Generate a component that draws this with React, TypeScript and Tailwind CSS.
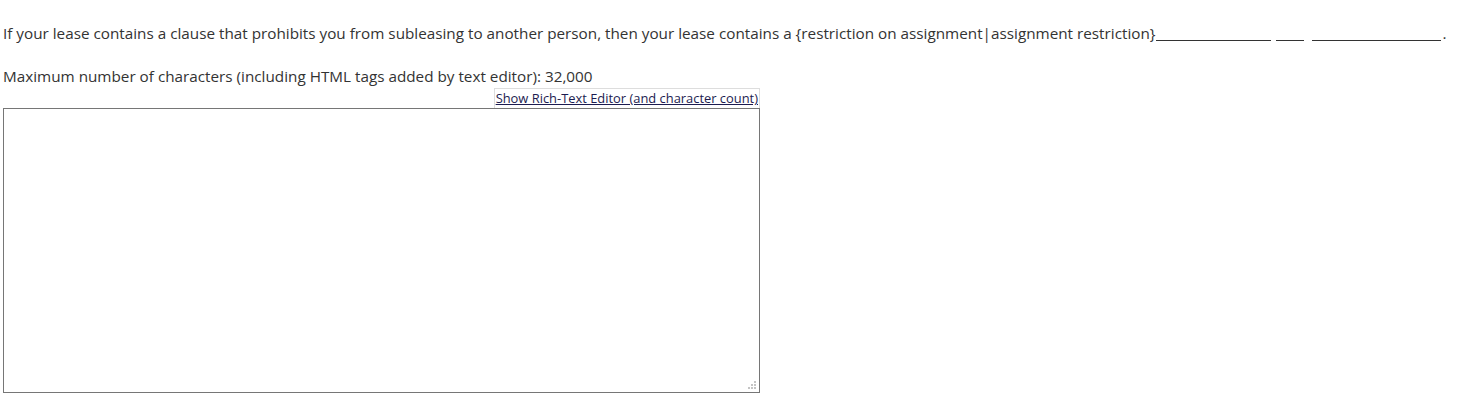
import React from "react";

export default function App() {
  return (
    <div
      className="min-h-[405px] w-[1464px] bg-white pl-[3px] pt-[21px] text-[#333333]"
      style={{ fontFamily: '"Open Sans", sans-serif' }}
    >
      <p className="m-0 whitespace-nowrap text-[15.27px] leading-[24px]">
        If your lease contains a clause that prohibits you from subleasing to another person, then your lease contains a{" "}
        {"{restriction on assignment|assignment restriction}"}
        <span className="mb-[-2px] inline-block h-[1px] w-[115px] border-b border-[#333333] align-baseline" />
        <span className="mb-[-2px] ml-[5px] inline-block h-[1px] w-[28px] border-b border-[#333333] align-baseline" />
        <span className="mb-[-2px] ml-[8px] inline-block h-[1px] w-[129px] border-b border-[#333333] align-baseline" />
        <span className="ml-[2px]">.</span>
      </p>
      <p className="m-0 mt-[19px] text-[15.27px] leading-[24px]">
        Maximum number of characters (including HTML tags added by text editor): 32,000
      </p>
      <div className="flex w-[757px] flex-col">
        <div className="flex justify-end">
          <a
            href="#"
            className="border border-b-0 border-[#dddddd] px-[1px] text-[12.9px] leading-[19px] text-[#1c1c50] underline"
          >
            Show Rich-Text Editor (and character count)
          </a>
        </div>
        <div className="relative h-[285px] w-[757px]">
          <textarea className="block h-[285px] w-[757px] resize-none border border-[#767676] bg-white p-[2px] text-[13px] outline-none" />
          <svg className="pointer-events-none absolute bottom-[3px] right-[3px]" width="9" height="9" viewBox="0 0 9 9">
            <rect x="6" y="0" width="2" height="2" fill="#c4c4c4" />
            <rect x="3" y="3" width="2" height="2" fill="#c4c4c4" />
            <rect x="6" y="3" width="2" height="2" fill="#c4c4c4" />
            <rect x="0" y="6" width="2" height="2" fill="#c4c4c4" />
            <rect x="3" y="6" width="2" height="2" fill="#c4c4c4" />
            <rect x="6" y="6" width="2" height="2" fill="#c4c4c4" />
          </svg>
        </div>
      </div>
    </div>
  );
}
